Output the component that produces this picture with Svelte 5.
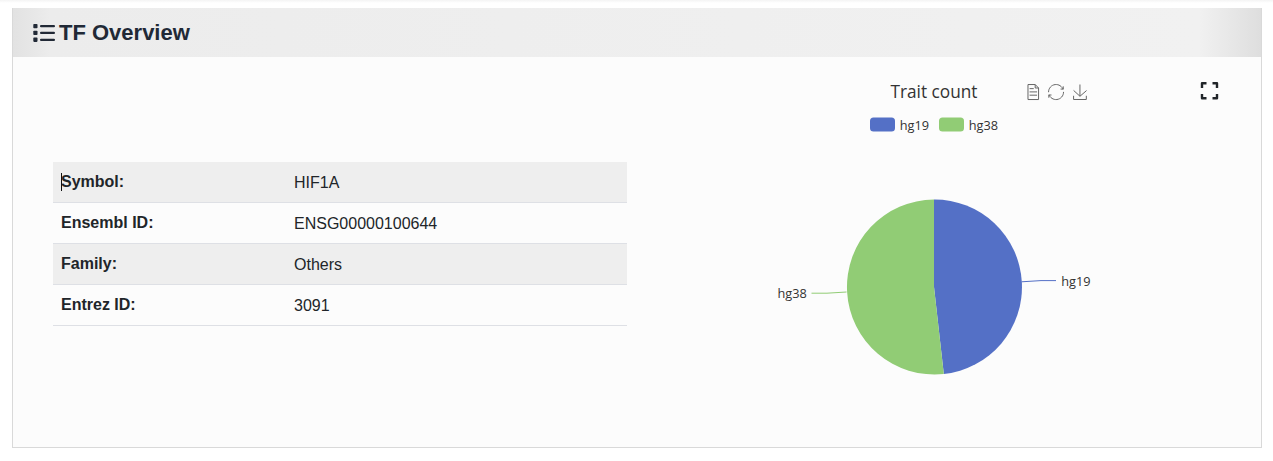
<script>
  const rows = [
    ['Symbol:', 'HIF1A'],
    ['Ensembl ID:', 'ENSG00000100644'],
    ['Family:', 'Others'],
    ['Entrez ID:', '3091']
  ];
</script>

<div class="page">
  <section class="card">
    <header>
      <svg class="list" width="22" height="18" viewBox="0 0 22 18" fill="#212936">
        <rect x="0.3" y="0" width="4.2" height="4.3" rx="0.8" />
        <rect x="0.3" y="6.8" width="4.2" height="4.3" rx="0.8" />
        <rect x="0.3" y="13.6" width="4.2" height="4.3" rx="0.8" />
        <rect x="7" y="1" width="15" height="2.3" rx="1.1" />
        <rect x="7" y="7.8" width="15" height="2.3" rx="1.1" />
        <rect x="7" y="14.7" width="15" height="2.3" rx="1.1" />
      </svg>
      <h2>TF Overview</h2>
    </header>
    <div class="body">
      <div class="table">
        {#each rows as [label, value], i}
          <div class="row" class:striped={i % 2 === 0}>
            <div class="label">{#if i === 0}<span class="caret"></span>{/if}{label}</div>
            <div class="value">{value}</div>
          </div>
        {/each}
      </div>
      <svg class="chart" width="574" height="390" viewBox="647 57 574 390">
        <text class="title" x="890.5" y="98" textLength="87" lengthAdjust="spacingAndGlyphs">Trait count</text>
        <g fill="none" stroke="#666" stroke-width="1">
          <path vector-effect="non-scaling-stroke" transform="translate(1024.9 84) scale(.268)" d="M17.5,17.3H33M45.4,29.5h-28M11.5,2v56H51V14.8L38.4,2H11.5zM38.4,2.2v12.7H51M45.4,41.7h-28" />
          <path vector-effect="non-scaling-stroke" transform="translate(1048 84) scale(.268)" d="M47,18.9h9.8V8.7M56.3,20.1C52.1,9,40.5,0.6,26.8,2.1C12.6,3.7,1.6,16.2,2.1,30.6M13,41.1H3.1v10.2M3.7,39.9c4.2,11.1,15.8,19.5,29.5,18c14.2-1.6,25.2-14.1,24.7-28.5" />
          <path vector-effect="non-scaling-stroke" transform="translate(1072.4 84.5) scale(.2586)" d="M4.7,22.9L29.3,45.5L54.7,23.4M4.6,43.6L4.6,58L53.8,58L53.8,43.6M29.2,45.1L29.2,0" />
        </g>
        <path d="M1202 88V83.2H1206.5M1212.5 83.2H1217V88M1217 94V98.2H1212.5M1206.5 98.2H1202V94" fill="none" stroke="#212529" stroke-width="2.4" stroke-linejoin="round" />
        <rect x="870" y="117.5" width="25" height="14" rx="3.5" fill="#5470c6" />
        <text x="899.7" y="130" textLength="29.3" lengthAdjust="spacingAndGlyphs">hg19</text>
        <rect x="939" y="117.5" width="25" height="14" rx="3.5" fill="#91cc75" />
        <text x="968.7" y="130" textLength="29.3" lengthAdjust="spacingAndGlyphs">hg38</text>
        <path d="M934 287V199.5A87.5 87.5 0 0 1 943.8 374Z" fill="#5470c6" />
        <path d="M934 287L943.8 374A87.5 87.5 0 1 1 934 199.5Z" fill="#91cc75" />
        <path d="M1021.5 281.8L1041 280.6H1056" fill="none" stroke="#5470c6" />
        <path d="M846.5 292L827 293.2H811.5" fill="none" stroke="#91cc75" />
        <text x="1061.3" y="286" textLength="29.3" lengthAdjust="spacingAndGlyphs">hg19</text>
        <text x="777.5" y="298" textLength="29.3" lengthAdjust="spacingAndGlyphs">hg38</text>
      </svg>
    </div>
  </section>
</div>

<style>
  :global(body) {
    background: #fff;
  }
  .page {
    box-sizing: border-box;
    height: 461px;
    padding: 8px 11px 13px 12px;
    background: linear-gradient(#f4f4f4, #fff 3px);
    font-family: 'Liberation Sans', Arial, sans-serif;
    color: #212529;
  }
  .card {
    box-sizing: border-box;
    height: 440px;
    border: 1px solid #d9d9d9;
    border-top: 0;
    background: #fcfcfc;
  }
  header {
    display: flex;
    align-items: center;
    height: 49px;
    box-sizing: border-box;
    padding-left: 20px;
    gap: 4px;
    background: linear-gradient(90deg, #e2e2e2, #ececec 3%, #f1f1f1 95%, #dedede);
  }
  h2 {
    margin: 0;
    font-size: 22px;
    line-height: 26px;
    color: #212936;
  }
  .body {
    display: flex;
    gap: 20px;
    padding-left: 40px;
  }
  .table {
    width: 574px;
    padding-top: 105px;
  }
  .row {
    display: grid;
    grid-template-columns: 233px 1fr;
    box-sizing: border-box;
    height: 41px;
    border-bottom: 1px solid #dee0e5;
    font-size: 16px;
    line-height: 24px;
  }
  .striped {
    background: #eee;
  }
  .label {
    position: relative;
    padding: 8px 8px 7px;
    font-weight: bold;
  }
  .value {
    padding: 9px 8px 7px;
  }
  .caret {
    position: absolute;
    left: 8px;
    top: 11px;
    width: 1px;
    height: 18px;
    background: #111;
  }
  .chart {
    display: block;
    flex: none;
    font: 12.5px 'Open Sans', 'Noto Sans', sans-serif;
    fill: #333;
  }
  .title {
    font-size: 18px;
  }
</style>
